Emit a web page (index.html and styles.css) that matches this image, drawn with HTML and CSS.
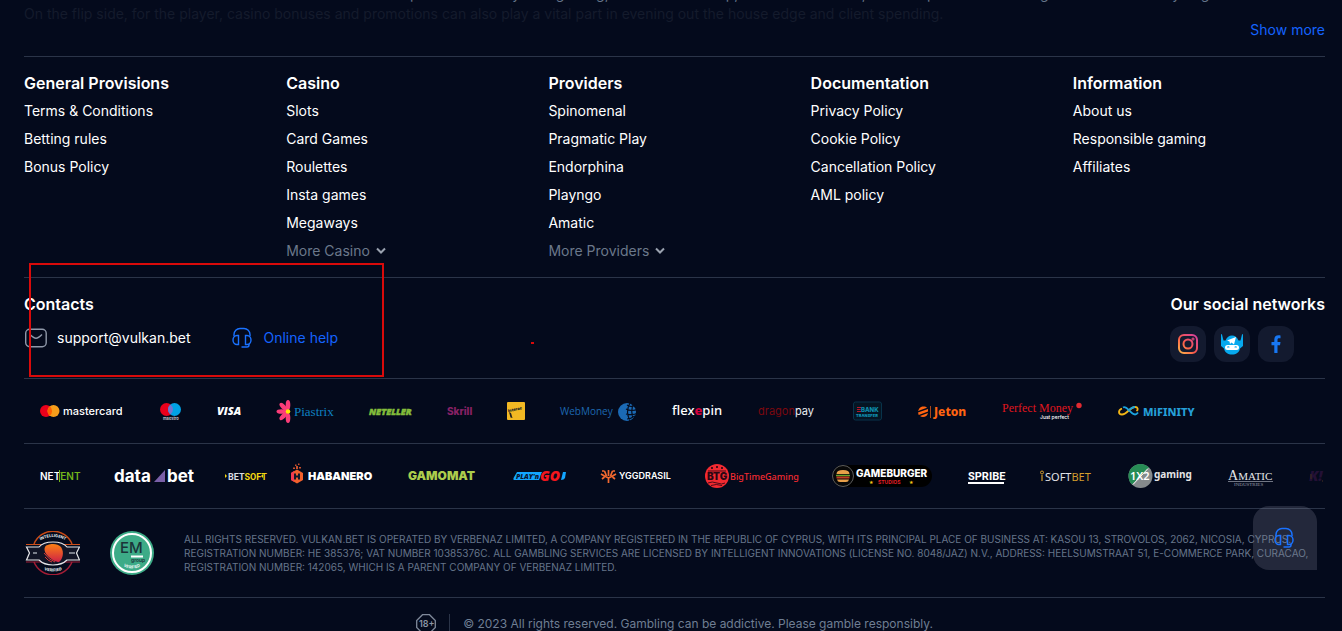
FILE: index.html
```html
<!DOCTYPE html>
<html lang="en">
<head>
  <meta charset="UTF-8" />
  <meta name="viewport" content="width=device-width, initial-scale=1.0"/>
  <title>Vulkan.bet</title>
  <link rel="stylesheet" href="styles.css">
</head>
<body>
  <footer class="page">
    <section class="intro">
      <div class="intro-text">
        <p>Most of the titles here are made for those who want to keep it fun and easy with gaming, from their desktop, tablets or at home, and compare offers among studios before they begin.</p>
        <p class="faded">On the flip side, for the player, casino bonuses and promotions can also play a vital part in evening out the house edge and client spending.</p>
      </div>
      <a class="show-more" href="#">Show more</a>
    </section>

    <nav class="columns">
      <div>
        <h3>General Provisions</h3>
        <ul>
          <li><a href="#">Terms &amp; Conditions</a></li>
          <li><a href="#">Betting rules</a></li>
          <li><a href="#">Bonus Policy</a></li>
        </ul>
      </div>
      <div>
        <h3>Casino</h3>
        <ul>
          <li><a href="#">Slots</a></li>
          <li><a href="#">Card Games</a></li>
          <li><a href="#">Roulettes</a></li>
          <li><a href="#">Insta games</a></li>
          <li><a href="#">Megaways</a></li>
        </ul>
        <button class="more" type="button">More Casino
          <svg width="10" height="10" viewBox="0 0 10 10"><path d="M1 2.500l4 4 4-4"/></svg>
        </button>
      </div>
      <div>
        <h3>Providers</h3>
        <ul>
          <li><a href="#">Spinomenal</a></li>
          <li><a href="#">Pragmatic Play</a></li>
          <li><a href="#">Endorphina</a></li>
          <li><a href="#">Playngo</a></li>
          <li><a href="#">Amatic</a></li>
        </ul>
        <button class="more" type="button">More Providers
          <svg width="10" height="10" viewBox="0 0 10 10"><path d="M1 2.500l4 4 4-4"/></svg>
        </button>
      </div>
      <div>
        <h3>Documentation</h3>
        <ul>
          <li><a href="#">Privacy Policy</a></li>
          <li><a href="#">Cookie Policy</a></li>
          <li><a href="#">Cancellation Policy</a></li>
          <li><a href="#">AML policy</a></li>
        </ul>
      </div>
      <div>
        <h3>Information</h3>
        <ul>
          <li><a href="#">About us</a></li>
          <li><a href="#">Responsible gaming</a></li>
          <li><a href="#">Affiliates</a></li>
        </ul>
      </div>
    </nav>

    <section class="contacts">
      <div>
        <h3>Contacts</h3>
        <div class="contact-links">
          <a class="contact" href="mailto:support@vulkan.bet">
            <svg width="24" height="24" viewBox="0 0 24 24" fill="none" stroke="#8f98a9" stroke-width="1.4">
              <rect x="1.700" y="3.200" width="20.500" height="17.500" rx="4"/>
              <path d="M6 8.500c2 2 4 3.700 6 3.700s4-1.700 6-3.700"/>
            </svg>
            support@vulkan.bet
          </a>
          <a class="contact help" href="#">
            <svg width="24" height="24" viewBox="0 0 24 24" fill="none" stroke="#1a72ff" stroke-width="1.4">
              <path d="M3 10V8.500a6 6 0 0 1 6-6h4a6 6 0 0 1 6 6V10"/>
              <path d="M7.500 9.500H6a4 4.500 0 0 0 0 9h1.500zM14.500 9.500H16a4 4.500 0 0 1 0 9h-1.500z"/>
              <path d="M18 18v1a2 2 0 0 1-2 2h-5.500"/>
            </svg>
            Online help
          </a>
        </div>
      </div>
      <div>
        <h3>Our social networks</h3>
        <div class="social">
          <a href="#" aria-label="Instagram">
            <svg width="24" height="24" viewBox="0 0 24 24" fill="none" stroke="url(#insta)" stroke-width="2">
              <defs>
                <linearGradient id="insta" x1="0" y1="24" x2="24" y2="0" gradientUnits="userSpaceOnUse">
                  <stop offset="0.100" stop-color="#fdc24a"/><stop offset="0.450" stop-color="#fa5a4a"/><stop offset="0.950" stop-color="#cf3bb0"/>
                </linearGradient>
              </defs>
              <rect x="3" y="3" width="18" height="18" rx="5"/>
              <circle cx="12" cy="12" r="4.500"/>
              <circle cx="17" cy="7" r="0.500"/>
            </svg>
          </a>
          <a href="#" aria-label="Telegram">
            <svg width="24" height="24" viewBox="0 0 24 24">
              <path fill="#07a9ee" d="M1 2l1 .5 1.500 6h2C7 5 9 3.500 12 3.500S17 5 18.500 8.500h2l1.500-6 1-.5v12l-3 2.500c-.8 4-4 6-8 6s-7.200-2-8-6L1 14z"/>
              <path fill="#fff" d="M7 8.500L16 5l-2 7.500-2.500-2-1.500 1.500-.5-2.500z"/>
              <rect x="5" y="13" width="14" height="5" rx="2.500" fill="#fff"/>
              <path fill="#07a9ee" d="M7 15.500a1.300 1.300 0 0 1 2.600 0zM14.400 15.500a1.300 1.300 0 0 1 2.600 0zM9 20h6l-1 1h-4z"/>
            </svg>
          </a>
          <a href="#" aria-label="Facebook">
            <svg width="24" height="24" viewBox="0 0 24 24"><path fill="#1877f2" d="M10.300 21v-7.700H7.500V10h2.800V7.600c0-3 1.600-4.400 4.200-4.400 1 0 1.800.1 2 .2v2.900h-1.400c-1.300 0-1.600.6-1.600 1.600V10h3l-.5 3.300h-2.500V21z"/></svg>
          </a>
        </div>
      </div>
    </section>

    <section class="logos">
      <!-- mastercard -->
      <svg width="84" height="40">
        <circle cx="6" cy="20" r="6" fill="#eb001b"/><circle cx="13.500" cy="20" r="6" fill="#f79e1b"/>
        <path fill="#ff5f00" d="M9.800 15.300a6 6 0 0 1 0 9.400 6 6 0 0 1 0-9.400z"/>
        <text class="inter" x="23" y="24" font-size="11" font-weight="500" fill="#fff">mastercard</text>
      </svg>
      <!-- maestro -->
      <svg width="21" height="40">
        <circle cx="6.500" cy="18.500" r="6.500" fill="#eb001b"/><circle cx="14.500" cy="18.500" r="6.500" fill="#00a2e5"/>
        <path fill="#7375cf" d="M10.500 13.400a6.500 6.500 0 0 1 0 10.200 6.500 6.500 0 0 1 0-10.200z"/>
        <text class="inter" x="3" y="29" font-size="4" font-weight="600" fill="#cfd3da">maestro</text>
      </svg>
      <!-- visa -->
      <svg width="24" height="40"><text class="open" x="0" y="24" font-size="11" font-weight="800" font-style="italic" fill="#fff">VISA</text></svg>
      <!-- piastrix -->
      <svg width="56" height="40">
        <g fill="#fb3c78">
          <ellipse cx="11" cy="14" rx="2.300" ry="5"/>
          <ellipse cx="11" cy="14" rx="2.300" ry="5" transform="rotate(-45 11 20.500)"/>
          <ellipse cx="11" cy="14" rx="2.300" ry="5" transform="rotate(-90 11 20.500)"/>
          <ellipse cx="11" cy="14" rx="2.300" ry="5" transform="rotate(-135 11 20.500)"/>
          <ellipse cx="11" cy="14" rx="2.300" ry="5" transform="rotate(180 11 20.500)"/>
        </g>
        <circle cx="11" cy="20.500" r="2.300" fill="#ffe600"/>
        <text class="serif" x="17" y="25" font-size="13" fill="#0e80c2">Piastrix</text>
      </svg>
      <!-- neteller -->
      <svg width="42" height="40"><text class="open" x="0" y="24" font-size="9" font-weight="800" font-style="italic" fill="#83bd3b" stroke="#83bd3b" stroke-width="0.500">NETELLER</text></svg>
      <!-- skrill -->
      <svg width="24" height="40"><text class="inter" x="0" y="24" font-size="10" font-weight="800" fill="#862165">Skrill</text></svg>
      <!-- interac -->
      <svg width="17" height="40">
        <rect x="0" y="11" width="18" height="18" rx="1" fill="#f2b823"/>
        <text class="inter" x="1" y="21" font-size="4" font-weight="900" fill="#222" transform="rotate(-12 2 20)">Interac</text>
        <path d="M2 21l2 1 1.500 5-2-.5z" fill="#222"/>
      </svg>
      <!-- webmoney -->
      <svg width="76" height="40">
        <text class="open" x="0" y="24" font-size="10" fill="#1d68b0">WebMoney</text>
        <circle cx="67" cy="21" r="9" fill="#1b6ab5"/>
        <g stroke="#050b1c" stroke-width="1.200" fill="none">
          <path d="M67 14c3 2 6 2 10 0M66 18c4 2 8 2 12 0M66 23c4 1 8 1 12-1M67 28c3 0 5-1 8-3M70 12c-3 5-3 12 0 18M74 12c-3 5-3 12 0 17"/>
        </g>
      </svg>
      <!-- flexepin -->
      <svg width="50" height="40"><text class="noto" x="0" y="24" font-size="13" font-weight="500" fill="#fff">flex<tspan fill="#d5003c" font-weight="800">e</tspan>pin</text></svg>
      <!-- dragonpay -->
      <svg width="59" height="40"><text class="inter" x="0" y="24" font-size="11" fill="#7b080f">dragon<tspan fill="#eceef2">pay</tspan></text></svg>
      <!-- bank transfer -->
      <svg width="29" height="40">
        <rect x="0.500" y="11" width="28" height="18" rx="2" fill="#051523" stroke="#08334a"/>
        <path d="M4 16.500h4M4 18.500h3.500M4 20.500h4" stroke="#b5162a" stroke-width="1.200"/>
        <text class="inter" x="8" y="21" font-size="6" font-weight="800" fill="#0f8fae">BANK</text>
        <text class="inter" x="3" y="26" font-size="4" font-weight="900" fill="#0f8fae">TRANSFER</text>
      </svg>
      <!-- jeton -->
      <svg width="48" height="40">
        <path fill="#ff6411" d="M1 18c1-2 3-2.500 4.500-2.500 1.500 0 3 .5 3.500 1.200L0 20zM0 21.500l10-3.500v2.500L.7 24zM2 25l8-3c-.5 2.500-2.500 4-5 4-1.200 0-2.200-.3-3-1z"/>
        <path d="M12.500 15v12" stroke="#a8481a" stroke-width="1"/>
        <text class="noto" x="16" y="25" font-size="12" font-weight="800" fill="#ff6411">Jeton</text>
      </svg>
      <!-- perfect money -->
      <svg width="80" height="40">
        <text class="serif" x="0" y="21" font-size="12" fill="#e0161e">Perfect Money</text>
        <circle cx="77" cy="14.500" r="2.700" fill="#e22a31"/>
        <text class="inter" x="38" y="28" font-size="5" font-weight="500" fill="#fff">Just perfect</text>
      </svg>
      <!-- mifinity -->
      <svg width="77" height="40">
        <g fill="none" stroke-width="1.800">
          <path d="M5 16.500C9 14 12 23 17 23.500" stroke="#1ba5e0"/>
          <path d="M4 17.500C0 19 0 23.500 4 23.500 9 23.500 12 16 17 16c3 0 3.500 2.500 1.500 4" stroke="#f4b615"/>
          <path d="M10 20C12 18 14 16 17 16M17 23.500c1 0 2-.5 3-2" stroke="#1ba5e0"/>
        </g>
        <text class="noto" x="25" y="25" font-size="11" font-weight="800" fill="#259fd8">MiFINITY</text>
      </svg>
    </section>

    <section class="logos">
      <!-- netent -->
      <svg width="38" height="40">
        <text class="inter" x="0" y="24" font-size="10" font-weight="600" fill="#fff">NET<tspan fill="#73b51b">ENT</tspan></text>
        <path d="M19.500 14v12" stroke="#73b51b"/>
      </svg>
      <!-- data.bet -->
      <svg width="75" height="40">
        <text class="inter" x="0" y="26" font-size="17" font-weight="700" fill="#fff">data</text>
        <path d="M51 14v12H40z" fill="#7a60a8"/>
        <text class="inter" x="53" y="26" font-size="17" font-weight="700" fill="#fff">bet</text>
      </svg>
      <!-- betsoft -->
      <svg width="29" height="40">
        <path d="M0 18v4l2-2zM38 18v4l-2-2z" fill="#f3d611"/>
        <text class="serif" x="3" y="24" font-size="9" font-weight="700" fill="#d9dce2"><tspan class="roboto">BET</tspan><tspan class="roboto" fill="#f3d611">SOFT</tspan></text>
      </svg>
      <!-- habanero -->
      <svg width="82" height="40">
        <path d="M7 13.500l6 3.500v7l-6 3.500-6-3.500v-7z" fill="#f2602c"/>
        <path d="M1 17l3-2v10.800L1 24z" fill="#f43b50"/>
        <path d="M3 13h2v-1.500H3zM6 13h2v-3H6zM9 12.500h2V11H9zM5 10h1.500V8.500H5zM8 9h1.500V7.500H8z" fill="#c9502d"/>
        <path d="M5 17.500v6M9 17.500v6M5 20.500h4" stroke="#111729" stroke-width="2"/>
        <text class="inter" x="18" y="24" font-size="11" font-weight="900" fill="#fff">HABANERO</text>
      </svg>
      <!-- gamomat -->
      <svg width="69" height="40"><text class="inter" x="0" y="24" font-size="12" font-weight="900" fill="#accd4c">GAMOMAT</text></svg>
      <!-- play'n go -->
      <svg width="52" height="40">
        <path d="M4 16h25l-3 8H1q-1 0-.5-2zM50 16h3l-1 6q-1 2-4 2z" fill="#12a5ff"/>
        <text class="open" x="3" y="23" font-size="7" font-weight="800" font-style="italic" fill="#0a1530">PLAY'n</text>
        <text class="open" x="27" y="25" font-size="14" font-weight="800" font-style="italic" fill="#f4161d">GO</text>
      </svg>
      <!-- yggdrasil -->
      <svg width="68" height="40">
        <path d="M7.500 27v-5M7.500 22l-4-2M7.500 22l4-2M7.500 20v-6M5.500 20l-2-5M9.500 20l2-5M3.500 20L0 18M11.500 20l3.500-2M3.500 21L1 23M11.500 21l2.500 2M3.500 15l-2.500 0M11.500 15l2.500 0" stroke="#f4692f" stroke-width="1.700" fill="none"/>
        <text class="inter" x="18" y="23" font-size="9" font-weight="600" fill="#fff">YGGDRASIL</text>
      </svg>
      <!-- big time gaming -->
      <svg width="91" height="40">
        <circle cx="12" cy="20" r="12" fill="#f22a31"/>
        <path d="M3 15h18M3 27q4-2 9 0t8 0M6 29.500q5-2 11 0" stroke="#4d0b17" stroke-width="1" fill="none"/>
        <path d="M6 12h2M11 11h2M16 12h2" stroke="#4d0b17" stroke-width="2"/>
        <text class="inter" x="2" y="24" font-size="10" font-weight="900" fill="#2a0713">BTG</text>
        <text class="noto" x="25" y="24" font-size="9" font-weight="500" fill="#f22a31">BigTimeGaming</text>
      </svg>
      <!-- gameburger -->
      <svg width="100" height="40">
        <rect x="0" y="9" width="100" height="22" rx="11" fill="#000"/>
        <circle cx="11" cy="20" r="10.500" fill="#080808" stroke="#5c5c5c"/>
        <path d="M4.500 18q0-4 6.500-4t6.500 4z" fill="#e8a04a"/>
        <path d="M4 19.500h14" stroke="#64a32c" stroke-width="1.500"/>
        <path d="M4.500 21.500h13" stroke="#c23b21" stroke-width="2"/>
        <path d="M5 23.500h12q-.5 2.500-3 2.500H8q-2.500 0-3-2.500z" fill="#e8a04a"/>
        <text class="inter" x="24" y="21" font-size="10" font-weight="800" fill="#fff">GAMEBURGER</text>
        <text class="inter" x="46" y="28" font-size="5" font-weight="700" fill="#e41e26">STUDIOS</text>
        <text class="dejavu" x="37" y="28" font-size="5" fill="#f6c915">★</text><text class="dejavu" x="77" y="28" font-size="5" fill="#f6c915">★</text>
      </svg>
      <!-- spribe -->
      <svg width="36" height="40">
        <text class="roboto" x="0" y="24" font-size="11" font-weight="700" fill="#fff">SPRIBE</text>
        <path d="M0 27h36" stroke="#fff" stroke-width="2"/>
      </svg>
      <!-- isoftbet -->
      <svg width="52" height="40">
        <path d="M2 19v6" stroke="#d39d2c" stroke-width="1.200"/><circle cx="2" cy="16.500" r="1.500" fill="none" stroke="#d39d2c"/>
        <text class="noto" x="5" y="25" font-size="11" fill="#e1e2e6">SOFT<tspan fill="#d39d2c">BET</tspan></text>
      </svg>
      <!-- 1x2 gaming -->
      <svg width="64" height="40">
        <circle cx="12.500" cy="20" r="12" fill="#858a8c"/>
        <path d="M21 11.500A12 12 0 1 0 4 28.500z" fill="#278c55"/>
        <path d="M20 12.500L5 28.500" stroke="#fff"/>
        <text class="noto" x="2" y="24" font-size="11" font-weight="600" fill="#fff">1X2</text>
        <text class="noto" x="26" y="22" font-size="10" font-weight="700" fill="#e3e3e5">gaming</text>
      </svg>
      <!-- amatic -->
      <svg width="45" height="40">
        <text class="serif" x="0" y="24" font-size="14" fill="#e5e7ea">A<tspan font-size="11">MATIC</tspan></text>
        <path d="M0 25.500h45" stroke="#717684"/>
        <text class="serif" x="6" y="30" font-size="5" fill="#989eaa">INDUSTRIES</text>
      </svg>
      <!-- kalamba -->
      <svg width="16" height="40" opacity="0.300">
        <text class="open" x="0" y="25" font-size="14" font-weight="800" font-style="italic" fill="#6a2070">K!</text>
        <path d="M2 18v5M13 25h1" stroke="#a86632" stroke-width="1.500"/>
      </svg>
    </section>

    <section class="legal">
      <!-- intelligent innovations seal -->
      <svg width="56" height="44" viewBox="0 0 56 44">
        <defs><linearGradient id="ball" x1="0" y1="0" x2="0" y2="1"><stop offset="0" stop-color="#fc8014"/><stop offset="1" stop-color="#cf2146"/></linearGradient></defs>
        <path d="M10 13a20.500 20.500 0 0 1 38 0" fill="none" stroke="#c74a17" stroke-width="1.500"/>
        <path d="M10 31a20.500 20.500 0 0 0 38 0" fill="none" stroke="#a31d35" stroke-width="1.500"/>
        <path d="M2 13.500h54" stroke="#ce4f1b"/><path d="M2 31h54" stroke="#a31d35"/>
        <path d="M2.500 16H15q4-5 14-5t14 5h12.500l-3 6 3 7H43q-5 5-14 5t-14-5H2.500l3-7z" fill="#111426" stroke="#e6e7ea" stroke-width="1.200"/>
        <path d="M21 16c1-3 12-5 16 0 4 6 1 13-2 15-6 0-17-9-14-15z" fill="url(#ball)"/>
        <path d="M20 22q5 7 11 9M21 26q3 4 7 5" stroke="#d53a3a" fill="none"/>
        <path id="arc-top" d="M12 12q17-12 34 0" fill="none"/>
        <path id="arc-bottom" d="M12 35q17 11 34 0" fill="none"/>
        <g class="inter" fill="#dfe1e6" font-size="4" font-weight="800">
          <text text-anchor="middle"><textPath href="#arc-top" startOffset="50%">INTELLIGENT</textPath></text>
          <text text-anchor="middle"><textPath href="#arc-bottom" startOffset="50%">VERIFIED</textPath></text>
        </g>
        <path d="M9 22h4M45 22h6" stroke="#9da2ad" stroke-width="1.500"/>
      </svg>
      <!-- em group seal -->
      <svg width="44" height="44" viewBox="0 0 44 44">
        <circle cx="22" cy="22" r="22" fill="#3dab87"/>
        <circle cx="22" cy="22" r="19" fill="none" stroke="#fff" stroke-width="2"/>
        <text class="inter" x="10" y="22" font-size="15" font-weight="500" fill="#1b3439">EM</text>
        <path d="M21 25.500h12" stroke="#fff" stroke-width="2"/>
        <text class="inter" x="21" y="31" font-size="5" font-weight="600" fill="#1b3439">group</text>
        <path id="arc-em" d="M10 33q12 9 24 0" fill="none"/>
        <text class="inter" font-size="4" font-weight="600" fill="#fff" text-anchor="middle"><textPath href="#arc-em" startOffset="50%">VERIFIED</textPath></text>
      </svg>
      <p>ALL RIGHTS RESERVED. VULKAN.BET IS OPERATED BY VERBENAZ LIMITED, A COMPANY REGISTERED IN THE REPUBLIC OF CYPRUS, WITH ITS PRINCIPAL PLACE OF BUSINESS AT: KASOU 13, STROVOLOS, 2062, NICOSIA, CYPRUS. REGISTRATION NUMBER: HE 385376; VAT NUMBER 10385376C. ALL GAMBLING SERVICES ARE LICENSED BY INTELLIGENT INNOVATIONS (LICENSE NO. 8048/JAZ) N.V., ADDRESS: HEELSUMSTRAAT 51, E-COMMERCE PARK, CURACAO, REGISTRATION NUMBER: 142065, WHICH IS A PARENT COMPANY OF VERBENAZ LIMITED.</p>
    </section>

    <section class="copyright">
      <svg width="20" height="20" viewBox="0 0 20 20">
        <path d="M6.500.7h7l5.800 5.800v7l-5.800 5.800h-7L.7 13.500v-7z" fill="none" stroke="#7f899a" stroke-width="1.300"/>
        <text class="inter" x="3" y="13" font-size="9" font-weight="600" fill="#8c95a5">18+</text>
      </svg>
      <p>© 2023 All rights reserved. Gambling can be addictive. Please gamble responsibly.</p>
    </section>
  </footer>

  <button class="chat" type="button" aria-label="Online help">
    <svg width="24" height="24" viewBox="0 0 24 24" fill="none" stroke="#1a72ff" stroke-width="1.500">
      <path d="M3 10V8.500a6 6 0 0 1 6-6h4a6 6 0 0 1 6 6V10"/>
      <path d="M7.500 9.500H6a4 4.500 0 0 0 0 9h1.500zM14.500 9.500H16a4 4.500 0 0 1 0 9h-1.500z"/>
      <path d="M18 18v1a2 2 0 0 1-2 2h-5.500"/>
    </svg>
  </button>

  <div class="marker"></div>
  <div class="marker-dot"></div>
</body>
</html>
```
FILE: styles.css
```css
* { box-sizing: border-box; }
body { margin: 0; height: 100vh; overflow: hidden; position: relative; background: #040a1c; color: #fff; font-family: Inter, sans-serif; font-size: 14px; }
h3, p, ul { margin: 0; padding: 0; }
ul { list-style: none; }
a { color: inherit; text-decoration: none; }
button { font-family: inherit; font-size: 14px; border: 0; padding: 0; background: none; cursor: pointer; }
h3 { font-size: 16px; line-height: 24px; font-weight: 600; }

.page { padding: 0 17px 0 24px; }
.page > section, .columns { border-bottom: 1px solid #2b3448; }

.intro { display: flex; flex-direction: column; padding-bottom: 16px; }
.intro-text { height: 24px; display: flex; flex-direction: column; justify-content: flex-end; overflow: hidden; line-height: 20px; color: #66758a; white-space: nowrap; }
.intro-text .faded { color: #141b2c; }
.show-more { align-self: flex-end; margin-top: -4px; line-height: 20px; color: #1463ff; }

.columns { display: grid; grid-template-columns: repeat(5, 1fr); gap: 10px; padding: 14px 0 12px; }
.columns ul { margin-top: 2px; }
.columns li { line-height: 28px; }
.more { display: flex; align-items: center; gap: 6px; line-height: 28px; color: #6b788b; }
.more svg { fill: none; stroke: #9aa2b0; stroke-width: 2; }

.contacts { display: flex; justify-content: space-between; padding: 14px 0 16px; }
.contact-links { display: flex; gap: 40px; margin-top: 10px; }
.contact { display: flex; align-items: center; gap: 9px; line-height: 24px; }
.help { color: #1463ff; }
.social { display: flex; gap: 8px; margin-top: 10px; }
.social a { display: flex; align-items: center; justify-content: center; width: 36px; height: 36px; border-radius: 12px; background: #131a2f; }

.logos { display: flex; align-items: center; gap: 36px; padding: 12px 0 12px 16px; }
.logos svg { flex: none; overflow: visible; }
.inter { font-family: Inter, sans-serif; }
.open { font-family: "Open Sans", sans-serif; }
.noto { font-family: "Noto Sans", sans-serif; }
.serif { font-family: "Liberation Serif", serif; }
.roboto { font-family: Roboto, sans-serif; }
.dejavu { font-family: "DejaVu Sans", sans-serif; }

.legal { display: flex; align-items: center; gap: 30px; padding: 22px 0; }
.legal svg { flex: none; }
.legal p { font-size: 10px; line-height: 14px; color: #66758a; }

.page > .copyright { display: flex; justify-content: center; align-items: center; gap: 13px; padding-top: 16px; border: 0; }
.copyright p { padding-left: 13px; border-left: 1px solid #2b3448; font-size: 12px; line-height: 20px; color: #6f7e93; }

.chat { position: fixed; right: 25px; bottom: 61px; width: 64px; height: 64px; display: flex; align-items: center; justify-content: center; border-radius: 16px 16px 0 16px; background: rgba(127, 132, 150, 0.25); }

/* highlighted area around the contacts block */
.marker { position: absolute; left: 29px; top: 263px; width: 355px; height: 114px; border: 2px solid #d90a0a; }
.marker-dot { position: absolute; left: 531px; top: 342px; width: 3px; height: 2px; background: #d90a0a; }
```
